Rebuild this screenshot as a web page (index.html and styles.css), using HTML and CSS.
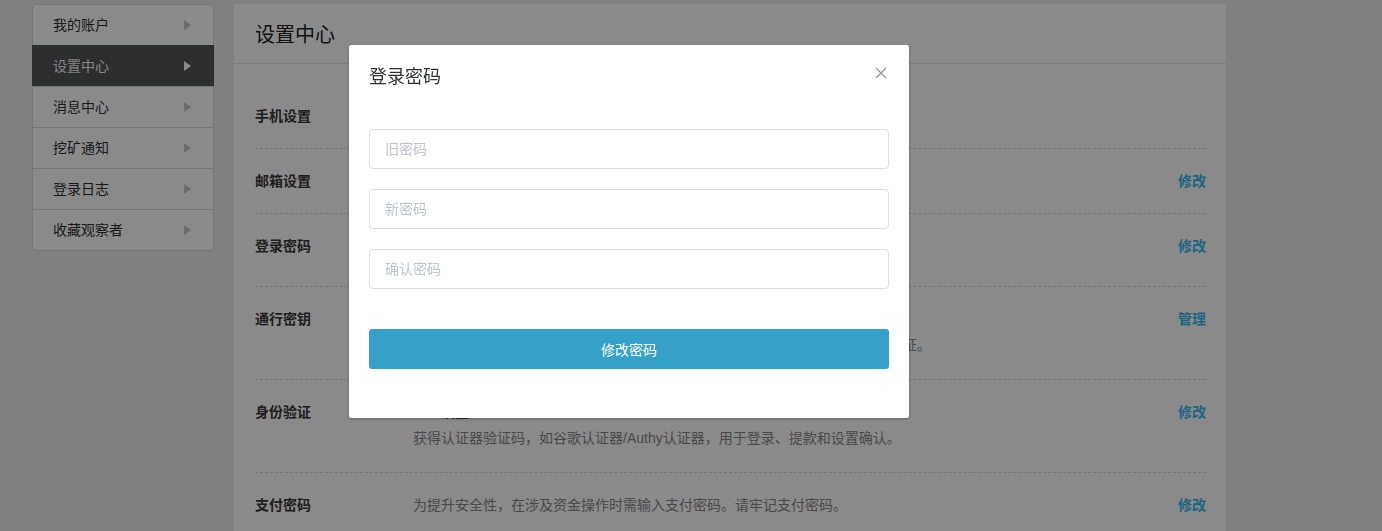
FILE: index.html
```html
<!DOCTYPE html>
<html lang="zh-CN">
<head>
<meta charset="UTF-8"/>
<meta name="viewport" content="width=device-width, initial-scale=1.0"/>
<title>设置中心 - 登录密码</title>
<link rel="stylesheet" href="styles.css">
</head>
<body>
<div class="page">
  <!-- Left menu -->
  <ul class="side-menu">
    <li class="menu-item">我的账户<i class="arrow"></i></li>
    <li class="menu-item active">设置中心<i class="arrow"></i></li>
    <li class="menu-item">消息中心<i class="arrow"></i></li>
    <li class="menu-item">挖矿通知<i class="arrow"></i></li>
    <li class="menu-item">登录日志<i class="arrow"></i></li>
    <li class="menu-item">收藏观察者<i class="arrow"></i></li>
  </ul>

  <!-- Settings card -->
  <div class="card">
    <div class="card-header">
      <h2>设置中心</h2>
    </div>
    <div class="setting-list">
      <div class="setting-row">
        <div class="setting-label">手机设置</div>
        <div class="setting-body">
          <div class="status">未绑定手机号</div>
        </div>
      </div>
      <div class="setting-row">
        <div class="setting-label">邮箱设置</div>
        <div class="setting-body">
          <div class="status">u***@example.com</div>
        </div>
        <a class="setting-action">修改</a>
      </div>
      <div class="setting-row">
        <div class="setting-label">登录密码</div>
        <div class="setting-body">
          <div class="status tall">已设置</div>
        </div>
        <a class="setting-action">修改</a>
      </div>
      <div class="setting-row">
        <div class="setting-label">通行密钥</div>
        <div class="setting-body">
          <div class="status"><span class="dot"></span>已设置</div>
          <div class="desc">使用通行密钥可通过指纹、面容或设备锁屏方式快速安全登录，无需输入密码验证。</div>
        </div>
        <a class="setting-action">管理</a>
      </div>
      <div class="setting-row">
        <div class="setting-label">身份验证</div>
        <div class="setting-body">
          <div class="status"><span class="dot"></span>已设置</div>
          <div class="desc">获得认证器验证码，如谷歌认证器/Authy认证器，用于登录、提款和设置确认。</div>
        </div>
        <a class="setting-action">修改</a>
      </div>
      <div class="setting-row">
        <div class="setting-label">支付密码</div>
        <div class="setting-body">
          <div class="desc inline">为提升安全性，在涉及资金操作时需输入支付密码。请牢记支付密码。</div>
        </div>
        <a class="setting-action">修改</a>
      </div>
    </div>
  </div>
</div>

<!-- Dialog: 登录密码 -->
<div class="mask">
  <div class="dialog">
    <div class="dialog-header">
      <span class="dialog-title">登录密码</span>
      <button class="dialog-close" aria-label="close">
        <svg width="16" height="16" viewBox="0 0 16 16"><path d="M3 3L13 13M13 3L3 13" stroke="#909399" stroke-width="1.2" fill="none"/></svg>
      </button>
    </div>
    <div class="dialog-body">
      <input class="field" type="password" placeholder="旧密码">
      <input class="field" type="password" placeholder="新密码">
      <input class="field" type="password" placeholder="确认密码">
      <button class="submit-btn">修改密码</button>
    </div>
  </div>
</div>
</body>
</html>
```

FILE: styles.css
```css
/* Global */
html, body {
  margin:0; padding:0;
  height:100%;
  background:#ededed;
  font-family:"Liberation Sans", "Noto Sans CJK SC", sans-serif;
  font-size:14px;
  color:#333;
  overflow:hidden;
}

/* Page => menu on the left, card on the right */
.page {
  display:flex;
  align-items:flex-start;
  gap:20px;
  padding:4px 0 0 32px;
}

/* Side menu */
.side-menu {
  list-style:none;
  margin:0; padding:0;
  width:182px;
  box-sizing:border-box;
  background:#fff;
  border:1px solid #d9d9d9;
  border-radius:4px;
  flex-shrink:0;
}
.menu-item {
  height:40px;
  line-height:40px;
  padding:0 22px 0 20px;
  border-top:1px solid #d9d9d9;
  display:flex;
  align-items:center;
  justify-content:space-between;
  color:#333;
  cursor:pointer;
}
.menu-item:first-child { border-top:none; }
.menu-item.active {
  background:#545656;
  border-top-color:#545656;
  color:#f2f2f2;
  margin:0 -1px;
  padding:0 23px 0 21px;
}
.arrow {
  width:0; height:0;
  border-top:5px solid transparent;
  border-bottom:5px solid transparent;
  border-left:7px solid #c8c8c8;
}
.menu-item.active .arrow { border-left-color:#fff; }

/* Card */
.card {
  width:992px;
  background:#fff;
  height:600px;
}
.card-header {
  height:59px;
  display:flex;
  align-items:center;
  padding:0 21px;
  border-bottom:1px solid #e6e6e6;
}
.card-header h2 {
  margin:0;
  font-size:20px;
  font-weight:normal;
  color:#222;
}
.setting-list {
  padding:20px 20px 0 21px;
}
.setting-row {
  display:flex;
  align-items:flex-start;
  padding:22px 0;
  border-bottom:1px dashed #d6d6d6;
  line-height:20px;
}
.setting-label {
  width:158px;
  flex-shrink:0;
  font-weight:bold;
  color:#3a3a3a;
}
.setting-body { flex:1; }
.status {
  display:flex;
  align-items:center;
  gap:5px;
  color:#333;
}
.status.tall { line-height:28px; }
.dot {
  width:9px; height:9px;
  border-radius:50%;
  background:#2fa336;
}
.desc {
  margin-top:4px;
  line-height:24px;
  color:#8a8a8a;
}
.desc.inline { margin-top:0; line-height:20px; }
.setting-action {
  font-weight:bold;
  color:#38bcec;
  cursor:pointer;
}

/* Mask + dialog */
.mask {
  position:fixed;
  top:0; left:0; right:0; bottom:0;
  background:rgba(0,0,0,0.46);
}
.dialog {
  position:absolute;
  left:349px; top:45px;
  width:560px;
  background:#fff;
  border-radius:2px;
  box-shadow:0 1px 3px rgba(0,0,0,0.3);
}
.dialog-header {
  position:relative;
  padding:20px 20px 10px;
}
.dialog-title {
  font-size:18px;
  line-height:24px;
  color:#303133;
}
.dialog-close {
  position:absolute;
  top:20px; right:20px;
  width:16px; height:16px;
  padding:0; border:none;
  background:none;
  cursor:pointer;
  display:flex;
}
.dialog-body {
  padding:30px 20px 49px;
  display:flex;
  flex-direction:column;
  gap:20px;
}
.field {
  height:40px;
  box-sizing:border-box;
  border:1px solid #dcdfe6;
  border-radius:4px;
  padding:0 15px;
  font-family:inherit;
  font-size:14px;
  color:#606266;
  outline:none;
}
.field::placeholder { color:#c0c4cc; }
.submit-btn {
  margin-top:20px;
  height:40px;
  border:none;
  border-radius:3px;
  background:#35a0c8;
  color:#fff;
  font-family:inherit;
  font-size:14px;
  cursor:pointer;
}
```
